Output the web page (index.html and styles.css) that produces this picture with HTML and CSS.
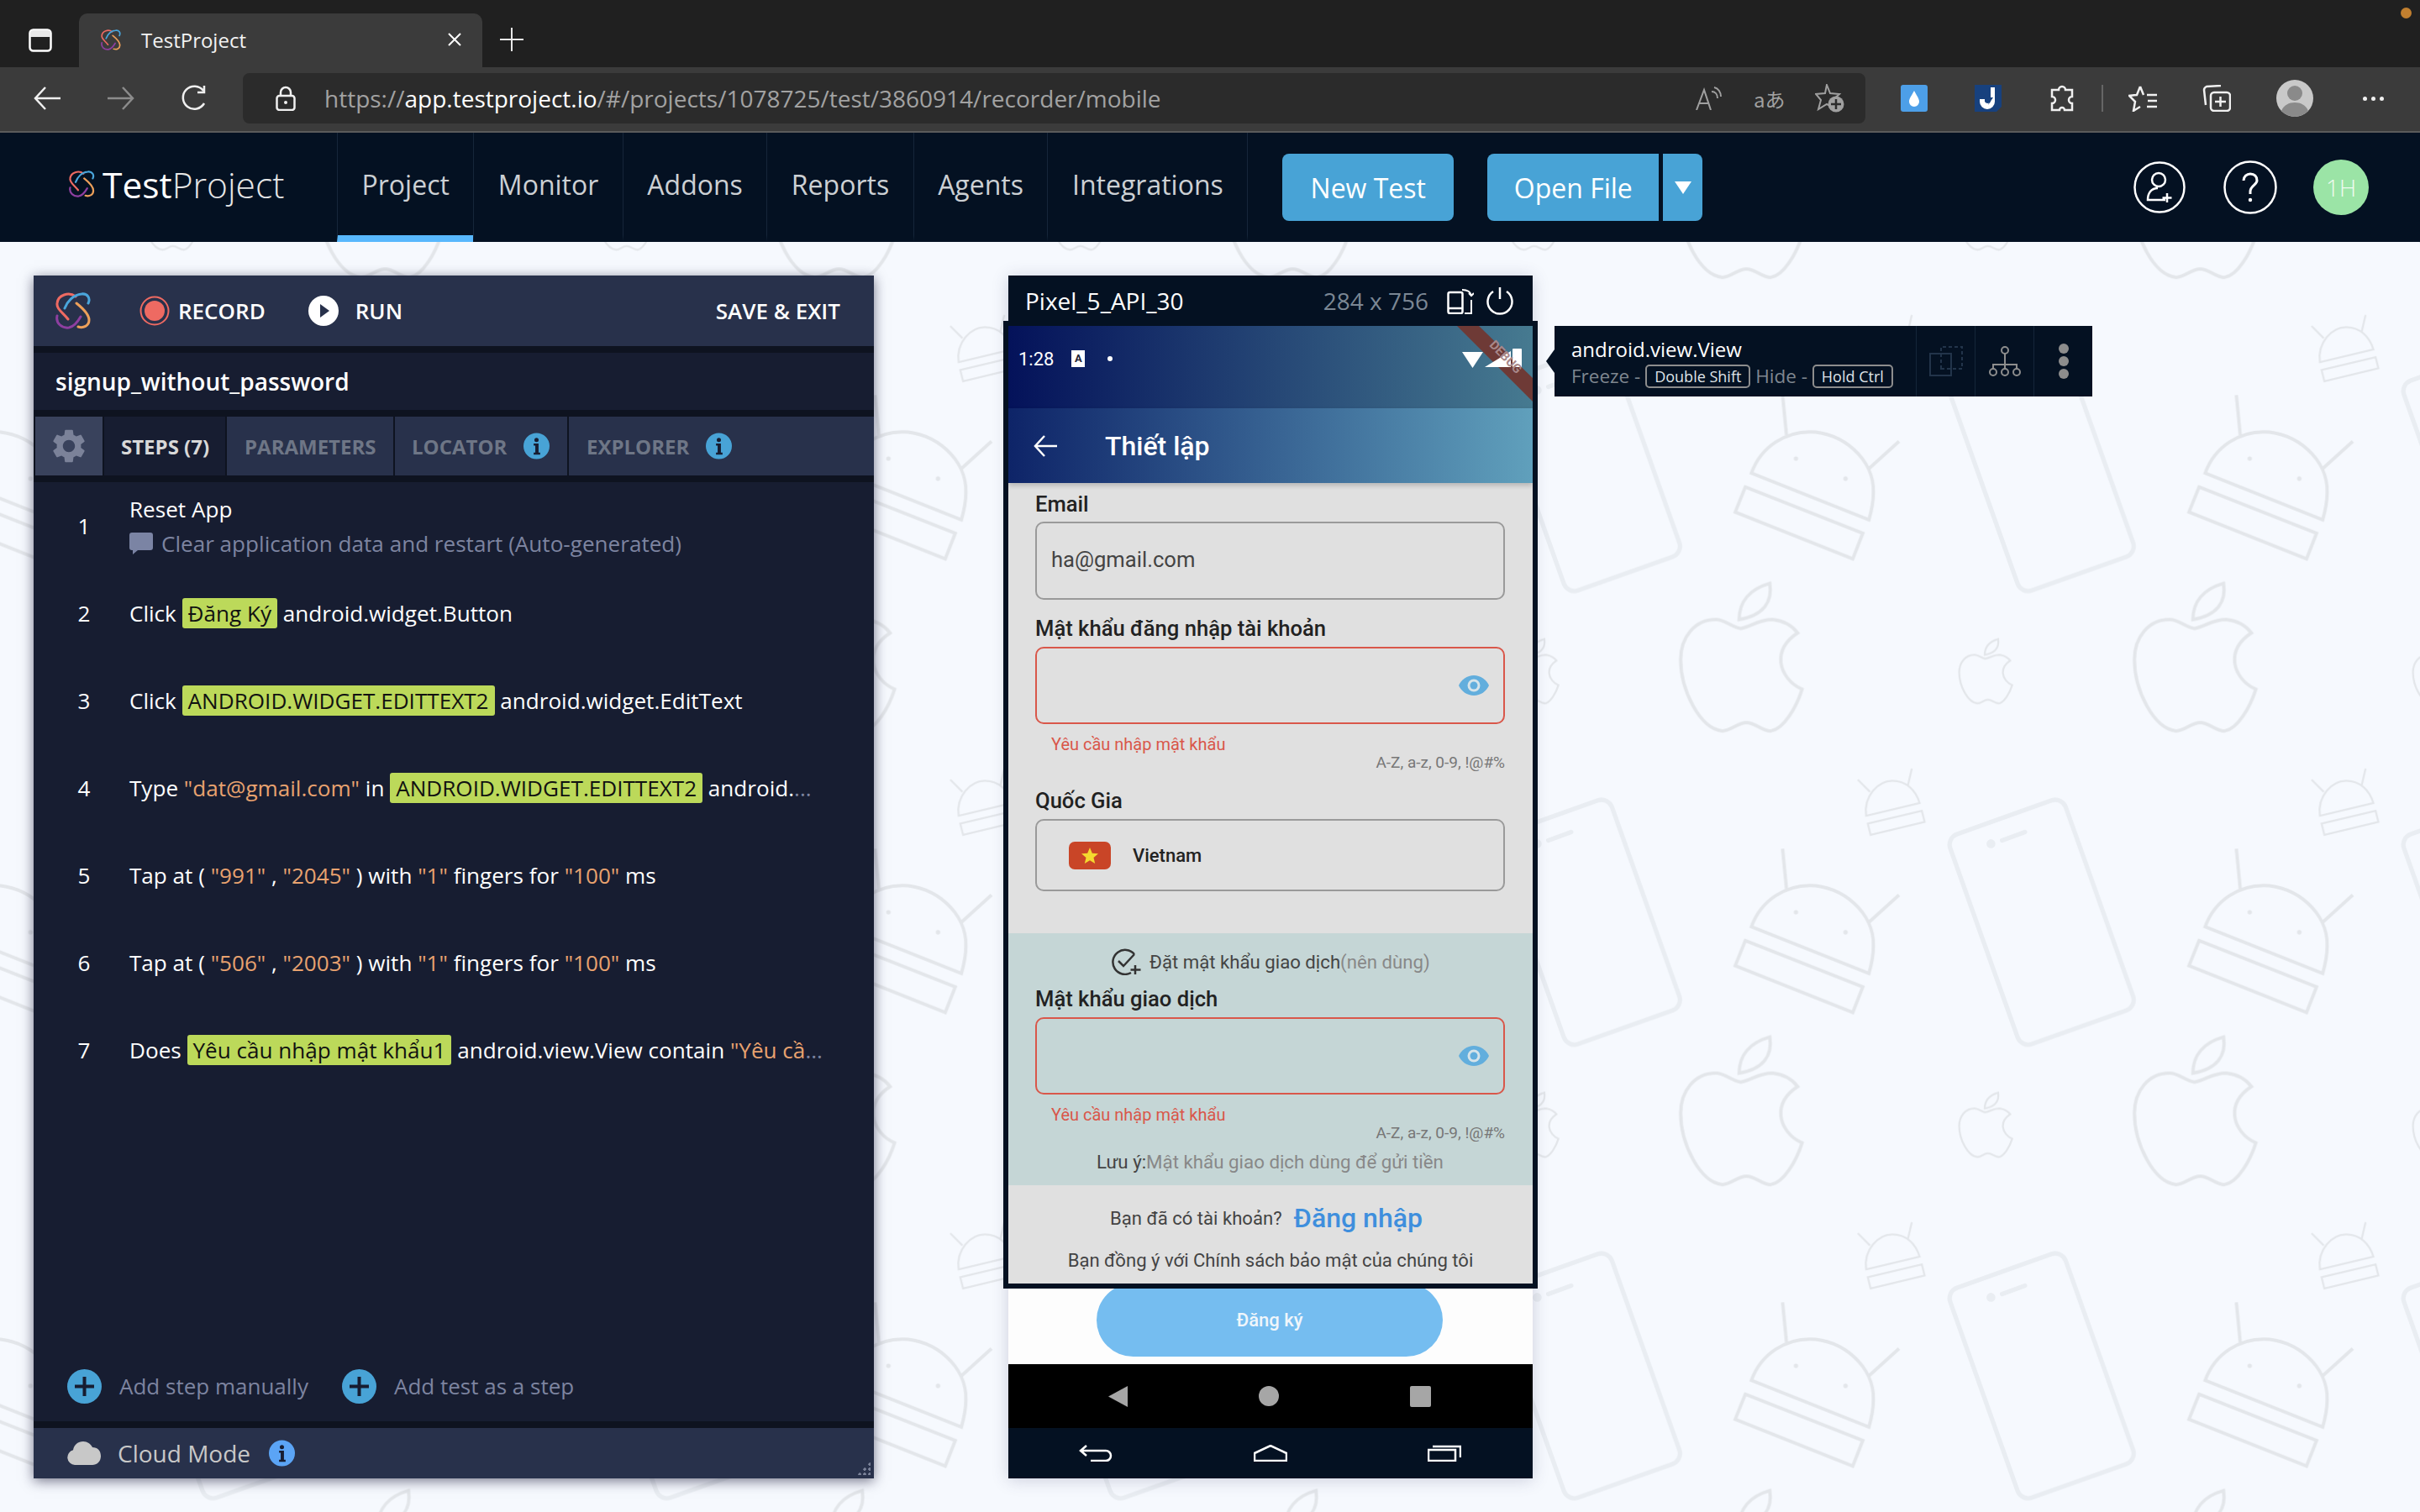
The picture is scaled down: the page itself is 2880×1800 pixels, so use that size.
FILE: index.html
```html
<!DOCTYPE html>
<html lang="en">
<head>
    <meta charset="UTF-8">
    <title>TestProject</title>
    <link rel="stylesheet" href="styles.css">
</head>
<body>
    <svg class="defs" width="0" height="0">
        <defs>
            <symbol id="logo" viewBox="0 0 44 44">
                <g fill="none" stroke-width="3" stroke-linecap="round">
                    <path stroke="#ee6a62" d="M24 5C16-1 3 3 2 13c-1 7 7 11 13 19"/>
                    <path stroke="#4aa6dc" d="M11 19C14 11 21 3 31 2c7-1 11 5 8 11"/>
                    <path stroke="#8e3fa0" d="M2 28c-2 9 6 15 14 14 6-1 10-6 14-13"/>
                    <path stroke="#eda05a" d="M25 13c5 4 15 12 15 20 0 7-7 10-13 8"/>
                </g>
            </symbol>
            <symbol id="info" viewBox="0 0 32 32">
                <circle cx="16" cy="16" r="16" fill="currentColor"/>
                <circle cx="16" cy="8.5" r="2.6" fill="#171d31"/>
                <path fill="#171d31" d="M12.5 13h6v11h2v2.5h-8V24h2v-8.500h-2z"/>
            </symbol>
            <symbol id="plus" viewBox="0 0 41 41">
                <circle cx="20.500" cy="20.500" r="20.500" fill="#48a3d6"/>
                <path stroke="#171d31" stroke-width="4" d="M20.500 9v23M9 20.500h23"/>
            </symbol>
            <symbol id="eye" viewBox="0 0 36 24">
                <path fill="#62aedd" d="M18 0C10 0 3 5 0 12c3 7 10 12 18 12s15-5 18-12C33 5 26 0 18 0z"/>
                <circle cx="18" cy="12" r="7.500" fill="#d6e4ea"/>
                <circle cx="18" cy="12" r="4.500" fill="#62aedd"/>
            </symbol>
            <g id="apple">
                <path d="M348 1219C368 1215 380 1203 405 1203 425 1205 440 1214 450 1227 430 1240 418 1258 420 1280 422 1300 438 1320 458 1328 448 1360 425 1400 402 1403 385 1403 375 1388 358 1388 342 1388 330 1403 315 1403 275 1400 240 1330 240 1275 240 1235 265 1203 303 1203 320 1203 332 1217 348 1219Z"/>
                <path d="M345 1203C345 1170 365 1148 400 1138 405 1170 390 1195 345 1203Z"/>
            </g>
            <g id="bg-tile" fill="none" stroke="#e3e6ea" stroke-width="6">
                <path d="M367 940C385 890 430 866 472 866 530 866 588 915 586 975 586 995 582 1010 578 1024Z"/>
                <path d="M430 872L423 800M578 932L632 883"/>
                <circle cx="447" cy="914" r="4" fill="#e3e6ea" stroke="none"/>
                <circle cx="536" cy="950" r="4" fill="#e3e6ea" stroke="none"/>
                <path d="M356 965L567 1048 549 1094 338 1010Z"/>
                <g stroke="#e9edf2" stroke-width="8">
                    <rect x="778" y="732" width="220" height="400" rx="20" transform="rotate(-19.600 888 932)"/>
                    <path stroke-linecap="round" d="M817 785L858 770"/>
                    <circle cx="797" cy="791" r="4"/>
                </g>
                <use href="#apple"/>
                <use href="#apple" stroke-width="8" transform="translate(635.400 741.800) scale(.436)"/>
                <g stroke-width="3.500">
                    <path d="M573 741C568 705 595 678 620 678 645 678 662 695 669 718Z"/>
                    <path d="M580 698L558 676M648 686L655 656"/>
                    <path d="M576 755L673 732 678 752 581 775Z"/>
                </g>
            </g>
            <pattern id="bg-pattern" patternUnits="userSpaceOnUse" width="814.500" height="814.500" patternTransform="translate(1841 192) scale(.663)">
                <use href="#bg-tile"/>
                <use href="#bg-tile" x="-814.500"/>
                <use href="#bg-tile" y="-814.500"/>
                <use href="#bg-tile" x="-814.500" y="-814.500"/>
            </pattern>
        </defs>
    </svg>

    <div class="tabstrip">
        <svg class="tab-icon" viewBox="0 0 28 28"><rect x="1.500" y="1.500" width="25" height="25" rx="4" fill="none" stroke="#fff" stroke-width="2.500"/><path fill="#e8e8e8" d="M2 5a3 3 0 0 1 3-3h18a3 3 0 0 1 3 3v5H2z"/></svg>
        <div class="tab">
            <svg class="favicon"><use href="#logo"/></svg>
            <span class="tab-title">TestProject</span>
            <svg class="tab-close" viewBox="0 0 18 18"><path stroke="#fff" stroke-width="2" d="M2 2l14 14M16 2L2 16"/></svg>
        </div>
        <svg class="tab-new" viewBox="0 0 28 28"><path stroke="#e8e8e8" stroke-width="2" d="M14 0v28M0 14h28"/></svg>
        <span class="rec-dot"></span>
    </div>

    <div class="toolbar">
        <div class="tb-btn"><svg width="32" height="28" viewBox="0 0 32 28" fill="none" stroke="#f0f0f0" stroke-width="2.500"><path d="M14 1L2 14l12 13M2 14h30"/></svg></div>
        <div class="tb-btn"><svg width="32" height="28" viewBox="0 0 32 28" fill="none" stroke="#8c8c8c" stroke-width="2.500"><path d="M18 1l12 13-12 13M30 14H0"/></svg></div>
        <div class="tb-btn"><svg width="32" height="32" viewBox="0 0 32 32" fill="none" stroke="#f0f0f0" stroke-width="2.500"><path d="M27 22a13.500 13.500 0 1 1-1-15M27 1v8h-8"/></svg></div>
        <div class="urlbar">
            <svg class="lock" viewBox="0 0 24 30"><path fill="none" stroke="#f0f0f0" stroke-width="2.500" d="M6 12V8a6 6 0 0 1 12 0v4"/><rect x="1.500" y="12" width="21" height="17" rx="3" fill="none" stroke="#f0f0f0" stroke-width="2.500"/><circle cx="12" cy="20" r="2" fill="#f0f0f0"/></svg>
            <div class="url">https://<b>app.testproject.io</b>/#/projects/1078725/test/3860914/recorder/mobile</div>
            <svg class="url-tool" width="31" height="28" viewBox="0 0 31 28" fill="none" stroke="#a0a0a0" stroke-width="2"><path d="M1 28L10 4l8 24M4 20h11M19 6c4 0 7 3 7 8M22 1c5 1 8 6 8 11"/></svg>
            <span class="url-tool translate">aあ</span>
            <svg class="url-tool" width="35" height="34" viewBox="0 0 35 34"><path fill="none" stroke="#a0a0a0" stroke-width="2" d="M14 1l4 10 11 1-8 7 3 11-10-6-10 6 3-11-6-7 11-1z"/><circle cx="25" cy="24" r="9.500" fill="#a0a0a0"/><path stroke="#2b2b2b" stroke-width="2.500" d="M25 18v12M19 24h12"/></svg>
        </div>
        <div class="tb-btn"><svg width="32" height="32" viewBox="0 0 32 32"><rect width="32" height="32" rx="3" fill="#4d9fe8"/><path fill="#fff" d="M16 7c-3 6-6 9-6 13a6 6 0 0 0 12 0c0-4-3-7-6-13z"/></svg></div>
        <div class="tb-btn"><svg width="32" height="32" viewBox="0 0 32 32"><path fill="#17417e" d="M0 0h32v26l-6 6H0z"/><path fill="#fff" d="M19 3h5v17a9 9 0 0 1-18 0v-3h6v3a4 4 0 0 0 7 0z"/><path fill="#17417e" d="M19 10l-5 8h4l-2 6 6-9h-4z"/></svg></div>
        <div class="tb-btn"><svg width="30" height="32" viewBox="0 0 30 32" fill="none" stroke="#f0f0f0" stroke-width="2.500"><path d="M11 6a4 4 0 0 1 8 0h8v8a4 4 0 0 0 0 8v8h-9a3 3 0 0 0-6 0H3v-8a4 4 0 0 0 0-8V6z"/></svg></div>
        <span class="tb-divider"></span>
        <div class="tb-btn"><svg width="34" height="32" viewBox="0 0 34 32" fill="none" stroke="#f0f0f0" stroke-width="2.500"><path d="M14 2l4 10h-0M14 2l-4 10-9 1 7 7-2 11 8-5M22 12h12M23 19h11M22 26h12"/></svg></div>
        <div class="tb-btn"><svg width="34" height="32" viewBox="0 0 34 32" fill="none" stroke="#f0f0f0" stroke-width="2.500"><path d="M4 24L2 6c0-2 1-3 3-4l17-1"/><rect x="10" y="9" width="23" height="22" rx="4"/><path d="M21.500 14v12M15 20h13"/></svg></div>
        <div class="tb-btn profile"><svg width="44" height="46" viewBox="0 0 44 46"><circle cx="22" cy="23" r="22" fill="#c9c9c9"/><circle cx="22" cy="17" r="9" fill="#8a8a8a"/><path fill="#8a8a8a" d="M6 38c3-7 9-10 16-10s13 3 16 10a22 22 0 0 1-32 0z"/></svg></div>
        <div class="tb-btn dots"><span></span><span></span><span></span></div>
    </div>

    <nav class="app-nav">
        <div class="brand">
            <svg class="brand-logo"><use href="#logo"/></svg>
            <span class="brand-name">Test<i>Project</i></span>
        </div>
        <a class="nav-item active">Project</a>
        <a class="nav-item">Monitor</a>
        <a class="nav-item">Addons</a>
        <a class="nav-item">Reports</a>
        <a class="nav-item">Agents</a>
        <a class="nav-item">Integrations</a>
        <button class="btn new-test">New Test</button>
        <button class="btn open-file">Open File</button>
        <button class="btn open-caret"><span></span></button>
        <div class="nav-right">
            <svg width="62" height="64" viewBox="0 0 62 64" fill="none" stroke="#fff" stroke-width="2.500"><circle cx="31" cy="32" r="29.500"/><circle cx="30" cy="23" r="8"/><path d="M29 33c-8 0-12 6-12 14h21M40 39v11M34.500 44.500h11"/></svg>
            <svg width="64" height="64" viewBox="0 0 64 64"><circle cx="32" cy="32" r="30.500" fill="none" stroke="#fff" stroke-width="2.500"/><path fill="none" stroke="#fff" stroke-width="3" d="M24 24c0-5 4-8 8-8 5 0 8 3 8 8s-8 6-8 13v3"/><circle cx="32" cy="47" r="2.200" fill="#fff"/></svg>
            <span class="user-badge">1H</span>
        </div>
    </nav>

    <main class="workspace">
        <svg class="backdrop" width="100%" height="100%"><rect width="100%" height="100%" fill="url(#bg-pattern)"/></svg>

        <section class="recorder">
            <header class="rec-head">
                <svg class="rec-logo"><use href="#logo"/></svg>
                <svg width="36" height="36" viewBox="0 0 36 36"><circle cx="18" cy="18" r="16.500" fill="none" stroke="#ee6a62" stroke-width="2"/><circle cx="18" cy="18" r="12" fill="#ee6a62"/></svg>
                <span class="rec-action">RECORD</span>
                <svg class="run-icon" width="36" height="36" viewBox="0 0 36 36"><circle cx="18" cy="18" r="18" fill="#fff"/><path fill="#28314b" d="M14 10l11 8-11 8z"/></svg>
                <span class="rec-action">RUN</span>
                <span class="rec-action save">SAVE &amp; EXIT</span>
            </header>
            <div class="test-name">signup_without_password</div>
            <div class="rec-tabs">
                <div class="rec-tab gear"><svg width="40" height="40" viewBox="2 2 20 20"><path fill="#7b8299" d="M19.140 12.940c.04-.3.06-.61.06-.94 0-.32-.02-.64-.07-.94l2.030-1.580a.49.49 0 0 0 .12-.61l-1.920-3.320a.488.488 0 0 0-.59-.22l-2.390.96c-.5-.38-1.030-.7-1.620-.94l-.36-2.540a.484.484 0 0 0-.48-.41h-3.840c-.24 0-.43.17-.47.41l-.36 2.540c-.59.24-1.130.57-1.620.94l-2.390-.96c-.22-.08-.47 0-.59.22L2.740 8.870c-.12.21-.08.47.12.61l2.030 1.580c-.05.3-.09.63-.09.94s.02.64.07.94l-2.030 1.580a.49.49 0 0 0-.12.61l1.920 3.320c.12.22.37.29.59.22l2.390-.96c.5.38 1.030.7 1.620.94l.36 2.540c.05.24.24.41.48.41h3.840c.24 0 .44-.17.47-.41l.36-2.540c.59-.24 1.130-.56 1.620-.94l2.390.96c.22.08.47 0 .59-.22l1.920-3.320c.12-.22.07-.47-.12-.61l-2.010-1.580zM12 15.600c-1.980 0-3.600-1.620-3.600-3.600s1.620-3.600 3.600-3.600 3.600 1.620 3.600 3.600-1.620 3.600-3.600 3.600z"/></svg></div>
                <div class="rec-tab current">STEPS (7)</div>
                <div class="rec-tab params">PARAMETERS</div>
                <div class="rec-tab locator">LOCATOR <svg class="info"><use href="#info"/></svg></div>
                <div class="rec-tab explorer">EXPLORER <svg class="info"><use href="#info"/></svg></div>
            </div>
            <ol class="steps">
                <li class="step"><span class="num">1</span><div class="step-text"><div>Reset App</div><div class="note"><svg width="28" height="26" viewBox="0 0 28 26"><path fill="#7b84a4" d="M3 0h22a3 3 0 0 1 3 3v15a3 3 0 0 1-3 3H10l-6 5v-5H3a3 3 0 0 1-3-3V3a3 3 0 0 1 3-3z"/></svg>Clear application data and restart (Auto-generated)</div></div></li>
                <li class="step"><span class="num">2</span><div class="step-text">Click <span class="chip">Đăng Ký</span> android.widget.Button</div></li>
                <li class="step"><span class="num">3</span><div class="step-text">Click <span class="chip">ANDROID.WIDGET.EDITTEXT2</span> android.widget.EditText</div></li>
                <li class="step"><span class="num">4</span><div class="step-text">Type <span class="val">"dat@gmail.com"</span> in <span class="chip">ANDROID.WIDGET.EDITTEXT2</span> android.<span class="more">...</span></div></li>
                <li class="step"><span class="num">5</span><div class="step-text">Tap at ( <span class="val">"991"</span> , <span class="val">"2045"</span> ) with <span class="val">"1"</span> fingers for <span class="val">"100"</span> ms</div></li>
                <li class="step"><span class="num">6</span><div class="step-text">Tap at ( <span class="val">"506"</span> , <span class="val">"2003"</span> ) with <span class="val">"1"</span> fingers for <span class="val">"100"</span> ms</div></li>
                <li class="step"><span class="num">7</span><div class="step-text">Does <span class="chip">Yêu cầu nhập mật khẩu1</span> android.view.View contain <span class="val">"Yêu cầ</span><span class="more">...</span></div></li>
            </ol>
            <div class="add-row">
                <svg class="add-icon"><use href="#plus"/></svg><span>Add step manually</span>
                <svg class="add-icon second"><use href="#plus"/></svg><span>Add test as a step</span>
            </div>
            <footer class="rec-foot">
                <svg width="40" height="28" viewBox="0 0 40 28"><path fill="#c8c8c8" d="M9 28a9 9 0 0 1-2-17.700C8 4 13 0 19 0c5 0 9 3 11 7 6 0 10 4 10 10.500S35 28 30 28z"/></svg>
                <span class="cloud-label">Cloud Mode</span>
                <svg class="info cloud-info"><use href="#info"/></svg>
                <span class="grip"></span>
            </footer>
        </section>

        <section class="device">
            <header class="device-head">
                <span class="device-name">Pixel_5_API_30</span>
                <span class="device-size">284 x 756</span>
                <svg class="device-rotate" width="32" height="32" viewBox="0 0 32 32"><rect x="1.500" y="6" width="17" height="25" rx="2" fill="none" stroke="#fff" stroke-width="2.500"/><path stroke="#fff" stroke-width="2.500" d="M2 25h16"/><path fill="none" stroke="#fff" stroke-width="2" d="M18 3c6 0 10 2 11 7M29 15v16h-8M26 7l3 3 3-3"/></svg>
                <svg width="34" height="34" viewBox="0 0 34 34" fill="none" stroke="#fff" stroke-width="2.500"><path d="M17 1v14M9 6a14.500 14.500 0 1 0 16 0"/></svg>
            </header>
            <div class="status-bar">
                <span class="clock">1:28</span>
                <span class="notif">A</span>
                <span class="notif-dot"></span>
                <svg class="debug-ribbon" width="90" height="90" viewBox="0 0 90 90"><path fill="#6e3a36" d="M0 0h26l64 62v28z"/></svg>
                <svg class="status-icons" width="71" height="24" viewBox="0 0 71 24"><path fill="#fff" d="M0 4h25L12.500 23z"/><path fill="#fff" d="M27 22L58 3v19z"/><rect x="60" y="0" width="11" height="22" rx="1" fill="#fff"/></svg>
                <span class="debug-text">DEBUG</span>
            </div>
            <div class="app-bar">
                <svg width="28" height="26" viewBox="0 0 28 26" fill="none" stroke="#fff" stroke-width="2.500"><path d="M13 1L2 13l11 12M2 13h26"/></svg>
                <span class="app-title">Thiết lập</span>
            </div>
            <div class="screen-form">
                <div class="form-main">
                    <label class="f-label first">Email</label>
                    <div class="f-input email">ha@gmail.com</div>
                    <label class="f-label">Mật khẩu đăng nhập tài khoản</label>
                    <div class="f-input error"><svg class="eye"><use href="#eye"/></svg></div>
                    <div class="f-error">Yêu cầu nhập mật khẩu</div>
                    <div class="f-hint">A-Z, a-z, 0-9, !@#%</div>
                    <label class="f-label country-label">Quốc Gia</label>
                    <div class="f-input country">
                        <svg class="flag" width="50" height="33" viewBox="0 0 50 33"><rect width="50" height="33" rx="7" fill="#c94527"/><path fill="#f4d92f" d="M25 7l2.800 6.700 7.200.6-5.500 4.700 1.700 7-6.200-3.800-6.200 3.800 1.700-7-5.500-4.700 7.200-.6z"/></svg>
                        <span>Vietnam</span>
                    </div>
                </div>
                <div class="form-pin">
                    <div class="pin-check">
                        <svg width="36" height="32" viewBox="0 0 36 32" fill="none" stroke="#333" stroke-width="2.500"><path d="M28 7A14.500 14.500 0 1 0 24 29M9 15l6 6L28 7M29 20v11M23.500 25.500h12"/></svg>
                        <span>Đặt mật khẩu giao dịch<em>(nên dùng)</em></span>
                    </div>
                    <label class="f-label pin-label">Mật khẩu giao dịch</label>
                    <div class="f-input error"><svg class="eye"><use href="#eye"/></svg></div>
                    <div class="f-error">Yêu cầu nhập mật khẩu</div>
                    <div class="f-hint">A-Z, a-z, 0-9, !@#%</div>
                    <div class="pin-note">Lưu ý:<em>Mật khẩu giao dịch dùng để gửi tiền</em></div>
                </div>
                <div class="form-foot">
                    <div class="login-row">Bạn đã có tài khoản?<a>Đăng nhập</a></div>
                    <div class="policy">Bạn đồng ý với Chính sách bảo mật của chúng tôi</div>
                </div>
            </div>
            <div class="submit-bar"><button class="submit">Đăng ký</button></div>
            <div class="android-nav">
                <svg width="23" height="25" viewBox="0 0 23 25"><path fill="#a6a6a6" d="M23 0v25L0 12.500z"/></svg>
                <svg width="24" height="24" viewBox="0 0 24 24"><circle cx="12" cy="12" r="12" fill="#a6a6a6"/></svg>
                <svg width="25" height="25" viewBox="0 0 25 25"><rect width="25" height="25" rx="2" fill="#a6a6a6"/></svg>
            </div>
            <div class="device-nav">
                <svg width="40" height="20" viewBox="0 0 40 20" fill="none" stroke="#fff" stroke-width="2.500"><path d="M9 1L2 7l7 6M2 7h30a6 6 0 0 1 0 12H14"/></svg>
                <svg width="40" height="20" viewBox="0 0 40 20" fill="none" stroke="#fff" stroke-width="2.500"><path d="M1 10L20 1l19 9v9H1z"/></svg>
                <svg width="40" height="20" viewBox="0 0 40 20" fill="none" stroke="#fff" stroke-width="2.500"><rect x="1" y="6" width="32" height="13"/><path d="M6 2h33v13"/></svg>
            </div>
            <div class="highlight"></div>
        </section>

        <aside class="inspector">
            <div class="inspector-info">
                <div class="inspector-name">android.view.View</div>
                <div class="inspector-keys">Freeze - <kbd>Double Shift</kbd> Hide - <kbd>Hold Ctrl</kbd></div>
            </div>
            <div class="inspector-tool"><svg width="40" height="36" viewBox="0 0 40 36" fill="none" stroke="#22344a" stroke-width="2"><rect x="1" y="9" width="25" height="26"/><path stroke-dasharray="4 3" d="M14 27V1h25v26z"/></svg></div>
            <div class="inspector-tool"><svg width="38" height="36" viewBox="0 0 38 36" fill="none" stroke="#8d8d8d" stroke-width="2"><circle cx="19" cy="5" r="4"/><path d="M19 9v13M5 27v-5h28v5M19 22v5"/><circle cx="5" cy="31" r="4"/><circle cx="19" cy="31" r="4"/><circle cx="33" cy="31" r="4"/></svg></div>
            <div class="inspector-tool kebab"><span></span><span></span><span></span></div>
        </aside>
    </main>
</body>
</html>
```
FILE: styles.css
```css
* {
    box-sizing: border-box;
}
html, body {
    margin: 0;
    padding: 0;
    width: 2880px;
    height: 1800px;
    overflow: hidden;
}
body {
    display: flex;
    flex-direction: column;
    font-family: "Open Sans", "Liberation Sans", sans-serif;
    background: #f6f9fe;
}
svg {
    display: block;
    flex: none;
}
.defs {
    position: absolute;
}

/* browser chrome */
.tabstrip {
    height: 80px;
    background: #202020;
    display: flex;
    align-items: flex-end;
    position: relative;
}
.tab-icon {
    width: 28px;
    height: 28px;
    margin: 0 0 18px 34px;
}
.tab {
    width: 480px;
    height: 64px;
    margin-left: 32px;
    padding: 0 0 2px 26px;
    background: #3b3b3b;
    border-radius: 10px 10px 0 0;
    display: flex;
    align-items: center;
}
.favicon {
    width: 25px;
    height: 25px;
}
.tab-title {
    margin-left: 23px;
    color: #f2f2f2;
    font-size: 24px;
}
.tab-close {
    width: 18px;
    height: 18px;
    margin-left: auto;
    margin-right: 24px;
}
.tab-new {
    width: 28px;
    height: 28px;
    margin: 0 0 19px 21px;
}
.rec-dot {
    position: absolute;
    top: 9px;
    right: 10px;
    width: 13px;
    height: 13px;
    border-radius: 50%;
    background: #c17f2f;
}
.toolbar {
    height: 78px;
    padding: 0 12px 2px;
    background: #3b3b3b;
    border-bottom: 2px solid #5b5b5b;
    display: flex;
    align-items: center;
}
.tb-btn {
    width: 88px;
    display: flex;
    justify-content: center;
    align-items: center;
    gap: 5px;
}
.tb-btn.profile {
    width: 98px;
}
.dots span {
    width: 5px;
    height: 5px;
    border-radius: 50%;
    background: #f0f0f0;
}
.tb-divider {
    width: 2px;
    height: 32px;
    margin: 0 3px;
    background: #666;
}
.urlbar {
    flex: 1;
    height: 60px;
    margin: 0 14px 0 13px;
    padding: 0 25px 0 39px;
    background: #2b2b2b;
    border-radius: 8px;
    display: flex;
    align-items: center;
    gap: 38px;
}
.lock {
    width: 24px;
    height: 30px;
    margin-right: -4px;
}
.url {
    flex: 1;
    color: #a2a2a2;
    font-size: 28px;
}
.url b {
    color: #fff;
    font-weight: 400;
}
.translate {
    color: #a0a0a0;
    font-size: 24px;
    width: 35px;
    white-space: nowrap;
    font-family: "Noto Sans CJK JP", "Open Sans", sans-serif;
}

/* app header */
.app-nav {
    height: 130px;
    background: #041122;
    display: flex;
    align-items: stretch;
    flex: none;
}
.brand {
    width: 401px;
    padding-left: 82px;
    display: flex;
    align-items: center;
    gap: 8px;
    padding-bottom: 8px;
}
.brand-logo {
    width: 32px;
    height: 32px;
}
.brand-name {
    color: #fff;
    font-size: 42.500px;
}
.brand-name i {
    font-style: normal;
    font-weight: 300;
    color: #e6e6e6;
}
.nav-item {
    padding: 0 28.500px;
    border-left: 1px solid #16263a;
    border-bottom: 8px solid transparent;
    color: #ccd0d4;
    font-size: 32px;
    display: flex;
    align-items: center;
}
.nav-item:last-of-type {
    border-right: 1px solid #16263a;
}
.nav-item.active {
    border-bottom-color: #58b8fd;
}
.btn {
    align-self: center;
    height: 80px;
    border: 0;
    background: #48a3d6;
    color: #fff;
    font-family: inherit;
    font-size: 32px;
    border-radius: 8px;
    padding: 0;
    margin-top: 0;
}
.new-test {
    width: 204px;
    margin-left: 41px;
}
.open-file {
    width: 204px;
    margin-left: 40px;
    border-radius: 8px 0 0 8px;
}
.open-caret {
    width: 47px;
    margin-left: 5px;
    border-radius: 0 8px 8px 0;
    display: flex;
    align-items: center;
    justify-content: center;
}
.open-caret span {
    border-left: 10px solid transparent;
    border-right: 10px solid transparent;
    border-top: 15px solid #fff;
}
.nav-right {
    margin-left: auto;
    padding-right: 61px;
    display: flex;
    align-items: center;
    gap: 45px;
}
.user-badge {
    width: 66px;
    height: 66px;
    margin-left: -2px;
    border-radius: 50%;
    background: #9be4a6;
    color: #f0fbf1;
    font-size: 28px;
    font-weight: 300;
    display: flex;
    align-items: center;
    justify-content: center;
}

/* workspace */
.workspace {
    position: relative;
    flex: 1;
    padding: 40px 0 0 40px;
    display: flex;
    align-items: flex-start;
    overflow: hidden;
}
.backdrop {
    position: absolute;
    left: 0;
    top: 0;
}

/* recorder panel */
.recorder {
    position: relative;
    width: 1000px;
    height: 1432px;
    background: #171d31;
    box-shadow: 0 3px 14px rgba(30, 30, 60, .6);
    display: flex;
    flex-direction: column;
    color: #fff;
}
.rec-head {
    height: 92px;
    padding: 0 40px 0 26px;
    background: #28314b;
    border-bottom: 8px solid #0e1320;
    display: flex;
    align-items: center;
}
.rec-logo {
    width: 44px;
    height: 44px;
    margin-right: 56px;
}
.rec-action {
    font-size: 26px;
    font-weight: 600;
    margin-left: 10px;
}
.run-icon {
    margin-left: 51px;
}
.rec-action + .run-icon + .rec-action {
    margin-left: 20px;
}
.rec-action.save {
    margin-left: auto;
}
.test-name {
    height: 76px;
    padding: 0 0 0 26px;
    border-bottom: 8px solid #0e1320;
    display: flex;
    align-items: center;
    font-size: 28px;
    font-weight: 600;
}
.rec-tabs {
    height: 78px;
    border-bottom: 8px solid #0e1320;
    padding-left: 2px;
    display: flex;
    gap: 2px;
    background: #0e1320;
}
.rec-tab {
    height: 70px;
    background: #28314b;
    color: #6e7686;
    font-size: 24px;
    font-weight: 700;
    display: flex;
    align-items: center;
    padding-left: 21px;
}
.rec-tab.gear {
    width: 80px;
    padding-left: 20px;
    background: #39425c;
}
.rec-tab.current {
    width: 144px;
    padding-left: 20px;
    background: #171d31;
    color: #d8d8d8;
}
.rec-tab.params {
    width: 198px;
}
.rec-tab.locator {
    width: 205px;
    padding-left: 20px;
}
.rec-tab.explorer {
    flex: 1;
}
.info {
    width: 31px;
    height: 32px;
    margin-left: 20px;
    color: #48a3d6;
}
.steps {
    flex: 1;
    margin: 0;
    padding: 0;
    list-style: none;
}
.step {
    height: 104px;
    display: flex;
    align-items: center;
    font-size: 26.100px;
}
.num {
    width: 114px;
    padding-left: 6px;
    text-align: center;
}
.step-text {
    white-space: nowrap;
}
.note {
    margin-top: 5px;
    color: #7d84a0;
    display: flex;
    align-items: center;
    gap: 10px;
}
.chip {
    display: inline-block;
    height: 36px;
    line-height: 36px;
    padding: 0 7px;
    background: #bcd95a;
    border-radius: 3px;
    color: #111;
}
.val {
    color: #e8a26f;
}
.more {
    color: #7d84a0;
}
.add-row {
    height: 100px;
    padding: 16px 0 0 40px;
    display: flex;
    align-items: center;
    color: #7d84a0;
    font-size: 26px;
}
.add-icon {
    width: 41px;
    height: 41px;
    margin-right: 21px;
}
.add-icon.second {
    margin-left: 40px;
}
.rec-foot {
    position: relative;
    height: 68px;
    padding-left: 40px;
    background: #28314b;
    border-top: 8px solid #0e1320;
    display: flex;
    align-items: center;
    color: #c8c8c8;
    font-size: 28px;
}
.cloud-label {
    margin-left: 20px;
}
.cloud-info {
    margin-left: 22px;
    color: #5ba4f5;
}
.grip {
    position: absolute;
    right: 4px;
    bottom: 4px;
    width: 16px;
    height: 16px;
    background: radial-gradient(circle, #7b8299 1.500px, transparent 2px) 0 0 / 6px 6px;
    clip-path: polygon(100% 0, 100% 100%, 0 100%);
}

/* device */
.device {
    position: relative;
    width: 624px;
    height: 1432px;
    margin-left: 160px;
    background: #fff;
    box-shadow: 0 2px 18px rgba(60, 60, 100, .22);
    display: flex;
    flex-direction: column;
}
.device-head {
    height: 60px;
    padding: 0 22px 0 20px;
    background: #041122;
    color: #fff;
    display: flex;
    align-items: center;
    font-size: 28px;
}
.device-size {
    margin-left: auto;
    color: #7b8794;
}
.device-rotate {
    margin: 0 14px 0 22px;
}
.status-bar {
    position: relative;
    height: 98px;
    padding: 0 0 20px 12px;
    background: linear-gradient(90deg, #04125a, #467a90);
    color: #fff;
    display: flex;
    align-items: center;
    font-family: Roboto, sans-serif;
}
.clock {
    font-size: 22px;
}
.notif {
    width: 16px;
    height: 20px;
    margin-left: 21px;
    background: #fff;
    color: #223;
    font-size: 13px;
    font-weight: 700;
    text-align: center;
    line-height: 20px;
}
.notif-dot {
    width: 6px;
    height: 6px;
    margin-left: 27px;
    border-radius: 50%;
    background: #fff;
}
.status-icons {
    position: relative;
    margin-left: auto;
    margin-right: 13px;
}
.debug-ribbon {
    position: absolute;
    top: 0;
    right: 0;
}
.debug-text {
    position: absolute;
    top: 28px;
    right: 8px;
    color: #a8888a;
    font-size: 15px;
    font-weight: 700;
    transform: rotate(46deg);
}
.app-bar {
    height: 89px;
    padding-left: 30px;
    background: linear-gradient(90deg, #0e2468, #60a0bc);
    box-shadow: 0 3px 6px rgba(0, 0, 0, .2);
    color: #fff;
    display: flex;
    align-items: center;
    position: relative;
}
.app-title {
    margin-left: 57px;
    font-family: Roboto, sans-serif;
    font-size: 32px;
    font-weight: 500;
}
.screen-form {
    height: 953px;
    background: #e0e0e0;
    font-family: Roboto, sans-serif;
    color: #222;
    display: flex;
    flex-direction: column;
}
.form-main {
    height: 536px;
    padding: 0 33px 0 32px;
}
.f-label {
    display: block;
    height: 34px;
    line-height: 34px;
    margin: 17px 0 5px;
    font-size: 25.600px;
    font-weight: 500;
}
.f-label.first {
    margin: 8px 0 4px;
}
.f-label.country-label {
    margin-top: 18px;
}
.f-input {
    height: 92px;
    padding: 0 17px;
    border: 2px solid #9a9a9a;
    border-radius: 10px;
    display: flex;
    align-items: center;
    color: #444;
    font-size: 25.600px;
}
.f-input.email {
    height: 93px;
    padding-bottom: 3px;
}
.f-input.error {
    border-color: #d9574a;
    justify-content: flex-end;
}
.f-input.country {
    height: 86px;
    padding-left: 38px;
    color: #222;
    font-size: 22px;
    font-weight: 500;
    gap: 26px;
}
.eye {
    width: 36px;
    height: 24px;
}
.f-error {
    height: 24px;
    line-height: 24px;
    margin: 12px 0 0 19px;
    color: #d9574a;
    font-size: 20px;
}
.f-hint {
    height: 20px;
    line-height: 20px;
    text-align: right;
    color: #777;
    font-size: 19px;
}
.form-pin {
    height: 300px;
    padding: 17px 33px 0 32px;
    background: #c5d6d6;
}
.pin-check {
    height: 34px;
    padding-left: 90px;
    display: flex;
    align-items: center;
    gap: 10px;
    color: #444;
    font-size: 22.200px;
}
em {
    font-style: normal;
    color: #888;
}
.f-label.pin-label {
    margin-top: 10px;
}
.pin-note {
    height: 30px;
    line-height: 30px;
    margin-top: 9px;
    padding-left: 73px;
    color: #444;
    font-size: 22.300px;
}
.form-foot {
    flex: 1;
    padding-top: 17px;
    color: #444;
    font-size: 22.100px;
    text-align: center;
}
.login-row {
    height: 44px;
    padding-right: 10px;
    display: flex;
    align-items: center;
    justify-content: center;
    gap: 14px;
}
.login-row a {
    color: #3f8fdd;
    font-size: 32px;
    font-weight: 500;
}
.policy {
    height: 28px;
    line-height: 28px;
    margin-top: 14px;
}
.submit-bar {
    height: 96px;
    background: #fdfdfd;
    padding-left: 105px;
}
.submit {
    width: 412px;
    height: 87px;
    border: 0;
    border-radius: 44px;
    background: #75bdf0;
    color: #f0f6fb;
    font-family: Roboto, sans-serif;
    font-size: 22px;
    font-weight: 500;
}
.android-nav {
    height: 76px;
    padding: 0 121px 0 119px;
    background: #000;
    display: flex;
    align-items: center;
    justify-content: space-between;
}
.device-nav {
    height: 60px;
    padding: 0 85px 0 84px;
    background: #041122;
    display: flex;
    align-items: center;
    justify-content: space-between;
}
.highlight {
    position: absolute;
    left: -6px;
    top: 54px;
    width: 636px;
    height: 1152px;
    border: 6px solid #041122;
    pointer-events: none;
}

/* element tooltip */
.inspector {
    position: absolute;
    left: 1850px;
    top: 100px;
    width: 640px;
    height: 84px;
    background: #041122;
    display: flex;
    color: #fff;
}
.inspector::before {
    content: "";
    position: absolute;
    left: -10px;
    top: 28px;
    border-top: 14px solid transparent;
    border-bottom: 14px solid transparent;
    border-right: 10px solid #041122;
}
.inspector-info {
    width: 431px;
    padding: 12px 0 0 20px;
}
.inspector-name {
    font-size: 24px;
    line-height: 32px;
}
.inspector-keys {
    color: #7f8790;
    font-size: 22.500px;
    white-space: nowrap;
}
kbd {
    display: inline-block;
    height: 28px;
    line-height: 24px;
    padding: 0 9px;
    border: 2px solid #8d8d8d;
    border-radius: 5px;
    color: #dfe3e7;
    font-family: inherit;
    font-size: 18px;
    vertical-align: 1px;
}
.inspector-tool {
    width: 70px;
    border-left: 1px solid #15263a;
    display: flex;
    align-items: center;
    justify-content: center;
}
.kebab {
    flex-direction: column;
    gap: 3px;
}
.kebab span {
    width: 12px;
    height: 12px;
    border-radius: 50%;
    background: #8d8d8d;
}
```
